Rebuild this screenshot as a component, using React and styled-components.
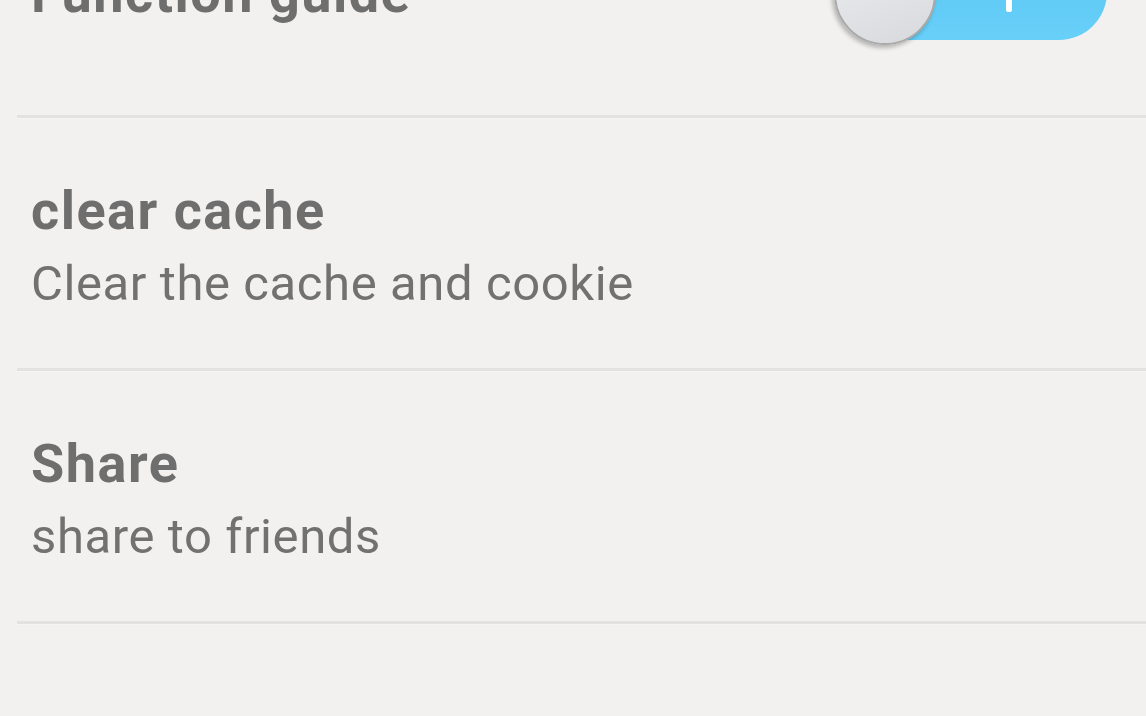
import styled, { createGlobalStyle } from "styled-components";

const GlobalStyle = createGlobalStyle`
  html, body {
    margin: 0;
    padding: 0;
    background: #f2f1ef;
    overflow: hidden;
  }
  body {
    font-family: Roboto, "Noto Sans", sans-serif;
  }
`;

const Page = styled.div`
  width: 1146px;
  height: 716px;
  overflow: hidden;
  background: #f2f1ef;
`;

// list is scrolled: the first row is half off the top
const List = styled.div`
  margin-top: -135px;
  display: flex;
  flex-direction: column;
`;

const Row = styled.div`
  box-sizing: border-box;
  height: 253px;
  margin-left: 17px;
  border-bottom: 3px solid #e3e2e0;
  box-shadow: 0 1px 0 #f6f5f4;
  display: flex;
  align-items: ${(p) => (p.$single ? "center" : "flex-start")};
  justify-content: space-between;
  padding: ${(p) => (p.$single ? "0 39px 0 14px" : "61px 39px 0 14px")};
`;

const TextBlock = styled.div`
  display: flex;
  flex-direction: column;
  margin-top: ${(p) => p.$offset || 0}px;
`;

const Title = styled.div`
  font-size: 54px;
  line-height: 64px;
  font-weight: 700;
  letter-spacing: 1.5px;
  color: #6e6e6e;
`;

const Subtitle = styled.div`
  margin-top: 9px;
  font-size: 49px;
  line-height: 64px;
  font-weight: 400;
  letter-spacing: 0.6px;
  color: #717171;
`;

const Track = styled.div`
  position: relative;
  margin-top: 4px;
  width: 272px;
  height: 96px;
  border-radius: 48px;
  background: linear-gradient(#58c7f3, #68cff8);
  display: flex;
  align-items: center;
  justify-content: flex-end;
  padding-right: 95px;
  box-sizing: border-box;
`;

const OnMark = styled.div`
  width: 6px;
  height: 40px;
  border-radius: 2px;
  background: #ffffff;
`;

const Thumb = styled.div`
  position: absolute;
  left: -1px;
  top: -1px;
  width: 98px;
  height: 98px;
  border-radius: 50%;
  background: linear-gradient(160deg, #eceef1, #d8d9dc);
  border: 2px solid #a9a9aa;
  box-shadow: -2px 3px 4px rgba(0, 0, 0, 0.25);
`;

const Switch = () => (
  <Track>
    <OnMark />
    <Thumb />
  </Track>
);

const items = [
  { title: "clear cache", sub: "Clear the cache and cookie" },
  { title: "Share", sub: "share to friends" },
];

export default function App() {
  return (
    <Page>
      <GlobalStyle />
      <List>
        <Row $single>
          <TextBlock $offset={8}>
            <Title>Function guide</Title>
          </TextBlock>
          <Switch />
        </Row>
        {items.map((it) => (
          <Row key={it.title}>
            <TextBlock>
              <Title>{it.title}</Title>
              <Subtitle>{it.sub}</Subtitle>
            </TextBlock>
          </Row>
        ))}
      </List>
    </Page>
  );
}
